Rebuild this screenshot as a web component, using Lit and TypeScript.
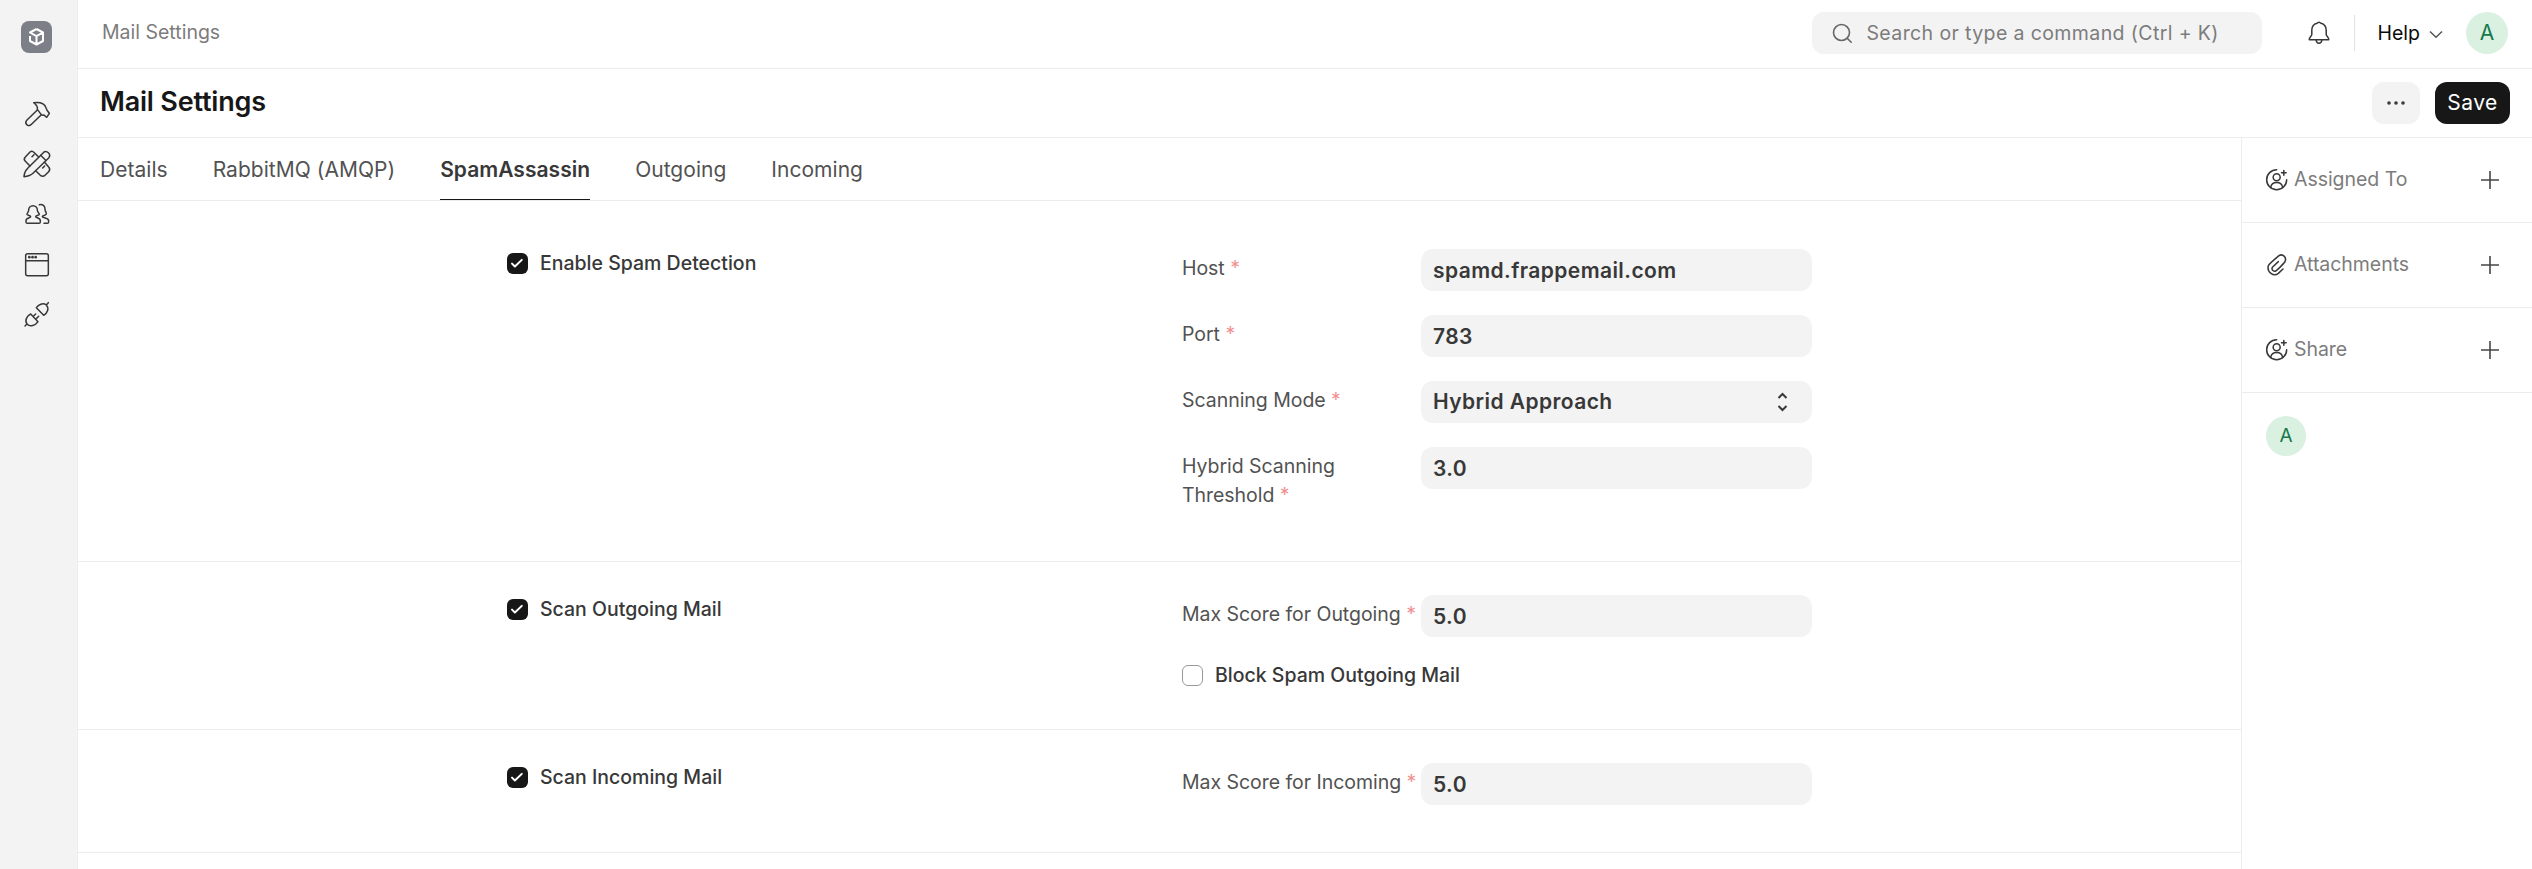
import { LitElement, html, css, svg } from "lit";
import { customElement } from "lit/decorators.js";

const ASSIGN = svg`<g stroke="#383838" stroke-width="4.6" stroke-linecap="round" fill="none"><path d="M35 5a30 30 0 1 0 30 30"/><circle cx="35" cy="28" r="10.5"/><path d="M17 58c4-19 32-19 36 0"/><path d="M56.500 7.500v14M49.500 14.500h14"/></g>`;
const CLIP = svg`<path d="M54 48L40 61C26 72 5 58 10 38C12 33 36 13 42 8C53 1 66 13 60 26C58 30 38 50 32 54C24 57 18 48 23 42L40 26" fill="none" stroke="#383838" stroke-width="4.6" stroke-linecap="round" stroke-linejoin="round"/>`;

const SIDE_ICONS = [
  svg`<path d="M35 11C52 9 68 13 72 26L75 34L82 43L74 55L66 48C61 50 58 48 55 43L46 31C48 22 43 17 35 11Z"/><path d="M46 33L15 63C6 72 17 86 27 77L58 47"/>`,
  svg`<path d="M6 83C7 71 11 63 17 58L64 11C74 2 89 16 80 27L33 73C28 78 19 82 6 83Z"/><path d="M56 19l15 15"/><path d="M24 51L10 37C4 31 6 28 10 24L24 9C29 5 32 6 37 11L50 24"/><path d="M67 39L80 54C85 59 84 63 80 68L69 79C64 83 60 83 55 79L41 65"/><path d="M36 17l-6 6M68 51l-6 6"/>`,
  svg`<path d="M33 20C25 20 20 26 20 33C20 40 14 43 15 46C17 50 26 49 26 53C26 57 12 56 12 65V69Q12 73 16 73H51Q55 73 55 69V65C55 56 41 57 41 53C41 49 50 50 52 46C53 43 46 40 46 33C46 26 41 20 33 20Z"/><path d="M52 17C62 14 69 21 69 30C69 38 74 41 73 45C71 50 61 49 61 53C61 57 80 56 80 65V69Q80 73 76 73H66"/>`,
  svg`<rect x="11" y="14" width="68" height="66" rx="6"/><path d="M11 35H79"/><g fill="#383838" stroke="none"><circle cx="22" cy="24.500" r="4"/><circle cx="31.500" cy="24.500" r="4"/><circle cx="41" cy="24.500" r="4"/></g>`,
  svg`<path d="M9 81L15 75C7 65 15 50 26 45L48 68C40 80 24 85 15 75M34 52L41 45M42 60L50 52"/><path d="M79 11L73 18C63 10 49 17 43 26L65 49C77 42 82 28 73 18"/>`,
];

const TABS = ["Details", "RabbitMQ (AMQP)", "SpamAssassin", "Outgoing", "Incoming"];

@customElement("app-root")
export class AppRoot extends LitElement {
  static styles = css`
    :host { display: block; height: 869px; overflow: hidden; background: #fff; font-family: Inter, sans-serif; font-size: 19.5px; letter-spacing: 0; color: #383838; }
    * { box-sizing: border-box; }
    svg { display: block; flex: none; }
    .shell { display: flex; height: 869px; }
    .side { width: 78px; background: #f3f3f3; border-right: 1px solid #ededed; display: flex; flex-direction: column; align-items: center; padding: 21px 4px 0 0; }
    .logo { width: 31px; height: 32px; border-radius: 8px; background: #7c7f88; display: grid; place-items: center; margin-bottom: 46px; }
    .side .nav { display: grid; gap: 20px; }
    .nav svg { fill: none; stroke: #383838; stroke-width: 4.5; stroke-linejoin: round; stroke-linecap: round; }
    .app { flex: 1; min-width: 0; display: flex; flex-direction: column; }
    .top { height: 69px; border-bottom: 1px solid #ededed; display: flex; align-items: center; padding: 0 24px 2px 24px; }
    .crumb { flex: 1; color: #7c7c7c; padding-bottom: 3px; }
    .search { width: 450px; height: 42px; border-radius: 12px; background: #f3f3f3; display: flex; align-items: center; padding-left: 19px; gap: 13px; color: #7c7c7c; letter-spacing: 0.02em; }
    .bell { margin-left: 46px; }
    .rule { width: 1px; height: 36px; background: #e2e2e2; margin: 0 22px 0 24px; }
    .help { color: #0b0b0b; margin-right: 9px; }
    .chevron { margin-top: 2px; }
    .avatar { width: 42px; height: 42px; border-radius: 50%; background: #daf0e1; color: #16794c; display: grid; place-items: center; font-size: 21px; padding-bottom: 2px; }
    .top .avatar { margin-left: 23px; }
    .head { height: 69px; border-bottom: 1px solid #ededed; display: flex; align-items: center; padding: 0 22px 0 22px; }
    h1 { flex: 1; margin: 0; font-size: 27px; font-weight: 600; color: #171717; letter-spacing: -0.2px; padding-bottom: 4px; }
    .more { width: 48px; height: 42px; border-radius: 12px; background: #f3f3f3; display: grid; place-items: center; margin-right: 15px; }
    .save { width: 75px; height: 42px; border-radius: 12px; background: #171717; color: #fff; display: grid; place-items: center; font-size: 21px; letter-spacing: 0.02em; padding-bottom: 2px; }
    .body { flex: 1; display: flex; min-height: 0; }
    .form { flex: 1; min-width: 0; }
    .tabs { height: 63px; border-bottom: 1px solid #ededed; display: flex; gap: 45px; padding-left: 22px; color: #525252; font-size: 21px; letter-spacing: 0.03px; }
    .tab { height: 62px; line-height: 63px; border-bottom: 1px solid transparent; }
    .tab.on { color: #383838; font-weight: 600; border-color: #171717; }
    .section { border-bottom: 1px solid #ededed; display: grid; grid-template-columns: 675px 630px; padding: 33px 0 0 429px; }
    .s1 { height: 361px; padding-top: 48px; }
    .s2 { height: 168px; }
    .s3 { height: 123px; }
    .check { display: flex; align-items: center; gap: 12px; height: 21px; font-weight: 500; white-space: nowrap; color: #383838; }
    .check span { padding-bottom: 2px; }
    .left { padding-top: 4px; }
    .box { width: 21px; height: 21px; border-radius: 6px; background: #171717; }
    .box.off { background: #fff; border: 1px solid #999; }
    .fields { display: flex; flex-direction: column; gap: 24px; }
    .field { display: grid; grid-template-columns: 239px 391px; height: 42px; }
    .label { color: #525252; line-height: 29px; padding-top: 5px; white-space: pre-line; letter-spacing: -0.04px; }
    .req { color: #f09090; }
    .input { height: 42px; border-radius: 12px; background: #f3f3f3; display: flex; align-items: center; justify-content: space-between; padding: 0 24px 0 12px; font-size: 21px; font-weight: 600; color: #383838; letter-spacing: 0.02em; }
    .input.select span { padding-bottom: 2px; }
    .fields .check { margin-top: 4px; }
    .aside { width: 291px; border-left: 1px solid #ededed; }
    .row { height: 85px; border-bottom: 1px solid #ededed; display: flex; align-items: center; padding: 0 33px 0 23px; color: #7c7c7c; }
    .row span { flex: 1; padding: 0 0 3px 5px; letter-spacing: -0.04px; }
    .aside .avatar { width: 40px; height: 40px; margin: 23px 0 0 24px; font-size: 19px; }
  `;

  box(on: boolean) {
    return on
      ? html`<div class="box"><svg width="21" height="21" viewBox="0 0 21 21"><path d="M5 10.600l2.900 2.900 6.900-6.600" fill="none" stroke="#fff" stroke-width="2" stroke-linecap="round" stroke-linejoin="round"/></svg></div>`
      : html`<div class="box off"></div>`;
  }
  check(text: string, on = true) {
    return html`<div class="check">${this.box(on)}<span>${text}</span></div>`;
  }
  field(label: string, value: string, select = false) {
    return html`<div class="field"><div class="label">${label} <span class="req">*</span></div><div class="input ${select ? "select" : ""}"><span>${value}</span>${select
      ? html`<svg width="11" height="20" viewBox="0 0 11 20"><path d="M1.500 6L5.500 2l4 4M1.500 14l4 4 4-4" fill="none" stroke="#383838" stroke-width="2"/></svg>`
      : ""}</div></div>`;
  }
  row(icon: unknown, text: string) {
    return html`<div class="row"><svg width="24" height="24" viewBox="0 0 72 72">${icon}</svg><span>${text}</span><svg width="18" height="18" viewBox="0 0 18 18"><path d="M9 0v18M0 9h18" stroke="#464646" stroke-width="1.600"/></svg></div>`;
  }

  render() {
    return html`<div class="shell">
      <nav class="side">
        <div class="logo"><svg width="19" height="20" viewBox="0 0 19 20"><path d="M9.500 2L16 5.500v8.500L9.500 17.500 3 14V9M9.500 2L3 5.500l6.500 3.700L16 5.500M9.500 9.200v8" fill="none" stroke="#fff" stroke-width="2" stroke-linejoin="round"/></svg></div>
        <div class="nav">${SIDE_ICONS.map((i) => html`<svg width="30" height="30" viewBox="0 0 90 90">${i}</svg>`)}</div>
      </nav>
      <div class="app">
        <header class="top">
          <div class="crumb">Mail Settings</div>
          <div class="search"><svg width="22" height="22" viewBox="0 0 22 22"><g fill="none" stroke="#666" stroke-width="1.600" stroke-linecap="round"><circle cx="10.500" cy="10.500" r="8"/><path d="M16.200 16.200l4 4"/></g></svg><span>Search or type a command (Ctrl + K)</span></div>
          <svg class="bell" width="22" height="24" viewBox="0 0 22 24"><path d="M11 1.200C10 1.200 9.800 2 9 2.200C6 3 3.800 5.600 3.800 9V13.500C3.800 15 1.300 16 1.300 18V18.800H20.700V18C20.700 16 18.200 15 18.200 13.500V9C18.200 5.600 16 3 13 2.200C12.200 2 12 1.200 11 1.200ZM8.200 19.500c.5 3.600 5.100 3.600 5.600 0" fill="none" stroke="#383838" stroke-width="1.500" stroke-linejoin="round"/></svg>
          <div class="rule"></div>
          <span class="help">Help</span>
          <svg class="chevron" width="14" height="9" viewBox="0 0 14 9"><path d="M1 1.500l6 5.700 6-5.700" fill="none" stroke="#525252" stroke-width="1.400"/></svg>
          <div class="avatar">A</div>
        </header>
        <div class="head">
          <h1>Mail Settings</h1>
          <div class="more"><svg width="20" height="4" viewBox="0 0 20 4"><g fill="#383838"><circle cx="3" cy="2" r="1.800"/><circle cx="10" cy="2" r="1.800"/><circle cx="17" cy="2" r="1.800"/></g></svg></div>
          <div class="save">Save</div>
        </div>
        <div class="body">
          <main class="form">
            <div class="tabs">${TABS.map((t, i) => html`<div class="tab ${i === 2 ? "on" : ""}">${t}</div>`)}</div>
            <section class="section s1">
              <div class="left">${this.check("Enable Spam Detection")}</div>
              <div class="fields">${this.field("Host", "spamd.frappemail.com")}${this.field("Port", "783")}${this.field("Scanning Mode", "Hybrid Approach", true)}${this.field("Hybrid Scanning\nThreshold", "3.0")}</div>
            </section>
            <section class="section s2">
              <div class="left">${this.check("Scan Outgoing Mail")}</div>
              <div class="fields">${this.field("Max Score for Outgoing", "5.0")}${this.check("Block Spam Outgoing Mail", false)}</div>
            </section>
            <section class="section s3">
              <div class="left">${this.check("Scan Incoming Mail")}</div>
              <div class="fields">${this.field("Max Score for Incoming", "5.0")}</div>
            </section>
          </main>
          <aside class="aside">
            ${this.row(ASSIGN, "Assigned To")}${this.row(CLIP, "Attachments")}${this.row(ASSIGN, "Share")}
            <div class="avatar">A</div>
          </aside>
        </div>
      </div>
    </div>`;
  }
}
